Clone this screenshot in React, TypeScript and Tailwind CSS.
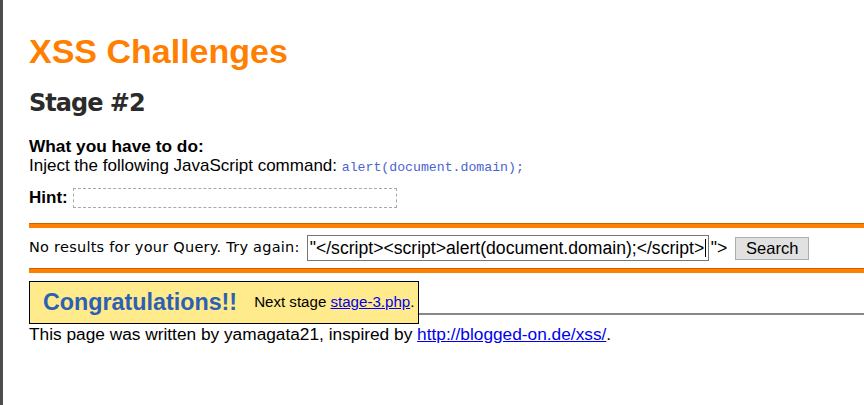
import React from "react";

export default function App() {
  return (
    <div className="min-h-[405px] w-full bg-white border-l-[3px] border-[#4d4d4d] font-['Liberation_Sans',Arial,sans-serif] text-black">
      <div className="pl-[26px] pt-[31px]">
        <h1 className="text-[34px] leading-[40px] font-bold text-[#ff8000]">XSS Challenges</h1>
        <h2 className="mt-[18px] text-[24px] leading-[28px] font-bold tracking-[-1px] text-[#2b2b2b] font-['DejaVu_Sans',sans-serif]">
          Stage #2
        </h2>
        <div className="mt-[20px] text-[17.3px] leading-[19px] font-bold">What you have to do:</div>
        <div className="text-[17px] leading-[19px]">
          Inject the following JavaScript command:{" "}
          <span className="font-['Liberation_Mono',monospace] text-[13.2px] text-[#4a64d0]">alert(document.domain);</span>
        </div>
        <div className="mt-[11px] flex h-[20px] items-center">
          <span className="text-[17px] font-bold leading-[20px]">Hint:</span>
          <div className="ml-[5px] h-[20px] w-[324px] border border-dashed border-[#a8a8a8]"></div>
        </div>
        <div className="mt-[15px] h-[5px] border-t border-[#c86400] bg-[#ff8000]"></div>
        <div className="flex h-[40px] items-center">
          <span className="font-['DejaVu_Sans',sans-serif] text-[14.5px] tracking-[0.25px]">No results for your Query. Try again:</span>
          <div className="ml-[7px] flex h-[26px] w-[402px] shrink-0 items-center border border-[#767676] bg-white pl-[2px] text-[17.6px] whitespace-nowrap overflow-hidden">
            <span>"&lt;/script&gt;&lt;script&gt;alert(document.domain);&lt;/script&gt;</span>
            <span className="ml-px h-[18px] w-px bg-black"></span>
          </div>
          <span className="ml-[2px] text-[17.6px]">"&gt;</span>
          <button className="ml-[8px] h-[23px] w-[74px] border border-[#adadad] bg-[#e1e1e1] text-[16.5px] leading-[21px] text-black">
            Search
          </button>
        </div>
        <div className="h-[5px] border-t border-[#c86400] bg-[#ff8000]"></div>
        <div className="mt-[8px] flex items-end">
          <div className="flex h-[43px] w-[390px] shrink-0 items-center border border-black bg-[#ffea8c] pl-[13px] whitespace-nowrap">
            <span className="text-[23.3px] font-bold text-[#2d5fb5]">Congratulations!!</span>
            <span className="ml-[17px] text-[15.1px]">
              Next stage <a className="text-[#0000ee] underline">stage-3.php</a>.
            </span>
          </div>
          <div className="mb-[9px] h-[2px] flex-1 bg-[#888888]"></div>
        </div>
        <div className="text-[17.3px] leading-[20px]">
          This page was written by yamagata21, inspired by{" "}
          <a className="text-[#0000ee] underline">http://blogged-on.de/xss/</a>.
        </div>
      </div>
    </div>
  );
}
